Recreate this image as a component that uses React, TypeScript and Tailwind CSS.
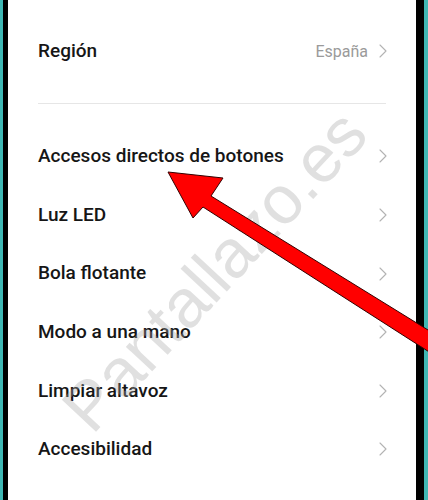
import { ChevronRight } from 'lucide-react';

const rows = [
  'Accesos directos de botones',
  'Luz LED',
  'Bola flotante',
  'Modo a una mano',
  'Limpiar altavoz',
  'Accesibilidad',
  'Impresión',
];

function Row({ label, value }: { label: string; value?: string }) {
  return (
    <div className="flex h-[58.6px] items-center justify-between">
      <span className="text-[19px] font-medium text-[#161616]">{label}</span>
      <span className="-mr-[9px] flex items-center gap-[3px]">
        {value ? <span className="mt-[2px] text-[16px] text-[#9a9a9a]">{value}</span> : null}
        <ChevronRight className="h-[24px] w-[24px] text-[#b3b3b3]" strokeWidth={1.1} />
      </span>
    </div>
  );
}

export default function App() {
  return (
    <div
      className="relative flex h-[500px] w-[428px] overflow-hidden bg-[#3fb7b4]"
      style={{ fontFamily: 'Roboto, "Noto Sans", Arial, sans-serif' }}
    >
      <div className="ml-[3px] w-[5px] bg-black" />
      <div className="flex-1 bg-white px-[30px]">
        <div className="-mt-[37px]">
          <Row label="Idioma" />
          <Row label="Región" value="España" />
        </div>
        <div className="my-[23px] h-px bg-[#e6e6e6]" />
        {rows.map((r) => (
          <Row key={r} label={r} />
        ))}
      </div>
      <div className="mr-[4px] w-[8px] bg-black" />

      {/* watermark */}
      <div
        className="pointer-events-none absolute left-[214px] top-[270px] -translate-x-1/2 -translate-y-1/2 -rotate-[47deg] whitespace-nowrap text-[68px] leading-none text-[#a8a8a8] opacity-35"
        style={{ fontFamily: 'Arial, "Liberation Sans", sans-serif' }}
      >
        Pantallazo.es
      </div>

      {/* arrow */}
      <svg className="pointer-events-none absolute inset-0" width="428" height="500" viewBox="0 0 428 500">
        <polygon
          points="168,172 223,178 211,196 462,351 462,373 203,207 193,218"
          fill="#ff0000"
          stroke="#300"
          strokeWidth="1"
          strokeLinejoin="miter"
        />
      </svg>
    </div>
  );
}
